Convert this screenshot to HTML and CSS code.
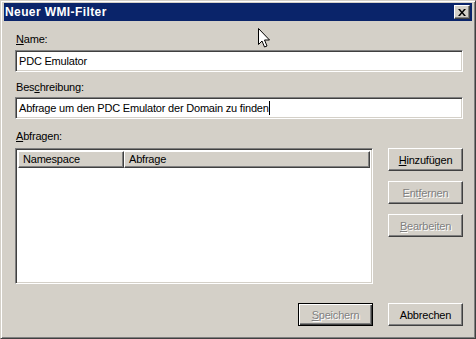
FILE: index.html
```html
<!DOCTYPE html>
<html lang="de">
<head>
    <meta charset="UTF-8">
    <title>Neuer WMI-Filter</title>
    <link rel="stylesheet" href="styles.css">
</head>
<body>
    <div class="window">
        <div class="titlebar">
            <span class="title">Neuer WMI-Filter</span>
            <button class="close-btn" title="Schließen">
                <svg width="8" height="7" viewBox="0 0 8 7"><path d="M0 0h2l2 2.5L6 0h2L5 3.5 8 7H6L4 4.5 2 7H0l3-3.5z" fill="#000"/></svg>
            </button>
        </div>

        <div class="content">
            <!-- Name -->
            <label class="field-label"><u>N</u>ame:</label>
            <div class="textbox">PDC Emulator</div>

            <!-- Beschreibung -->
            <label class="field-label second">Bes<u>c</u>hreibung:</label>
            <div class="textbox">Abfrage um den PDC Emulator der Domain zu finden<span class="caret"></span></div>

            <!-- Abfragen -->
            <label class="field-label third"><u>A</u>bfragen:</label>
            <div class="queries">
                <div class="listview">
                    <div class="list-header">
                        <div class="col col-ns">Namespace</div>
                        <div class="col col-query">Abfrage</div>
                    </div>
                </div>
                <div class="side-buttons">
                    <button class="btn"><u>H</u>inzufügen</button>
                    <button class="btn disabled">Ent<u>f</u>ernen</button>
                    <button class="btn disabled"><u>B</u>earbeiten</button>
                </div>
            </div>

            <div class="footer">
                <button class="btn default disabled"><u>S</u>peichern</button>
                <button class="btn">Abbrechen</button>
            </div>
        </div>

        <!-- Mauszeiger -->
        <svg class="cursor" width="13" height="21" viewBox="0 0 13 21">
            <path d="M0.5 0.5v16l3.5-3.5 2.5 6 2.5-1-2.5-6h5z" fill="#fff" stroke="#000" stroke-width="1"/>
        </svg>
    </div>
</body>
</html>
```

FILE: styles.css
```css
body {
    margin: 0;
    font-family: "Liberation Sans", Arial, sans-serif;
    font-size: 11px;
    letter-spacing: -0.2px;
    color: #000;
    background: #d4d0c8;
    overflow: hidden;
}

.window {
    position: relative;
    width: 476px;
    height: 339px;
    box-sizing: border-box;
    background: #d4d0c8;
    border: 1px solid;
    border-color: #d4d0c8 #404040 #404040 #d4d0c8;
    box-shadow: inset 1px 1px #fff, inset -1px -1px #808080;
    padding: 2px 3px 0 3px;
}

.titlebar {
    height: 18px;
    background: #0a246a;
    display: flex;
    align-items: center;
    justify-content: space-between;
    padding: 0 2px 0 1px;
}

.title {
    color: #fff;
    font-weight: bold;
    font-size: 12px;
    letter-spacing: 0.4px;
}

.close-btn {
    width: 16px;
    height: 14px;
    padding: 0;
    margin: 0;
    background: #d4d0c8;
    border: 1px solid;
    border-color: #fff #404040 #404040 #fff;
    box-shadow: inset -1px -1px #808080;
    display: flex;
    align-items: center;
    justify-content: center;
}

.content {
    padding: 12px 9px 0 11px;
}

.field-label {
    display: block;
    line-height: 13px;
    margin-bottom: 4px;
    padding-left: 1px;
}

.field-label.second {
    margin-top: 9px;
    margin-bottom: 3px;
}

.field-label.third {
    margin-top: 11px;
    margin-bottom: 5px;
}

.textbox {
    height: 22px;
    box-sizing: border-box;
    background: #fff;
    border: 1px solid;
    border-color: #808080 #fff #fff #808080;
    box-shadow: inset 1px 1px #404040, inset -1px -1px #d4d0c8;
    padding: 0 3px;
    line-height: 20px;
    white-space: nowrap;
}

.caret {
    display: inline-block;
    width: 1px;
    height: 14px;
    background: #000;
    vertical-align: -3px;
}

.queries {
    display: flex;
}

.listview {
    width: 358px;
    height: 136px;
    box-sizing: border-box;
    background: #fff;
    border: 1px solid;
    border-color: #808080 #fff #fff #808080;
    box-shadow: inset 1px 1px #404040, inset -1px -1px #d4d0c8;
    padding: 2px;
}

.list-header {
    display: flex;
    height: 17px;
}

.col {
    box-sizing: border-box;
    background: #d4d0c8;
    border: 1px solid;
    border-color: #fff #404040 #404040 #fff;
    box-shadow: inset -1px -1px #808080;
    padding: 0 4px;
    line-height: 15px;
}

.col-ns {
    width: 106px;
}

.col-query {
    flex: 1;
}

.side-buttons {
    display: flex;
    flex-direction: column;
    gap: 10px;
    margin-left: 15px;
}

.btn {
    width: 75px;
    height: 23px;
    padding: 0;
    margin: 0;
    font-family: "Liberation Sans", Arial, sans-serif;
    font-size: 11px;
    letter-spacing: -0.2px;
    color: #000;
    background: #d4d0c8;
    border: 1px solid;
    border-color: #fff #404040 #404040 #fff;
    box-shadow: inset -1px -1px #808080;
}

.btn.disabled {
    color: #808080;
    text-shadow: 1px 1px #fff;
}

.btn.default {
    border: 1px solid #000;
    box-shadow: inset 1px 1px #fff, inset -1px -1px #404040, inset -2px -2px #808080;
}

.footer {
    display: flex;
    justify-content: flex-end;
    gap: 15px;
    margin-top: 19px;
}

.cursor {
    position: absolute;
    left: 257px;
    top: 27px;
}
```
